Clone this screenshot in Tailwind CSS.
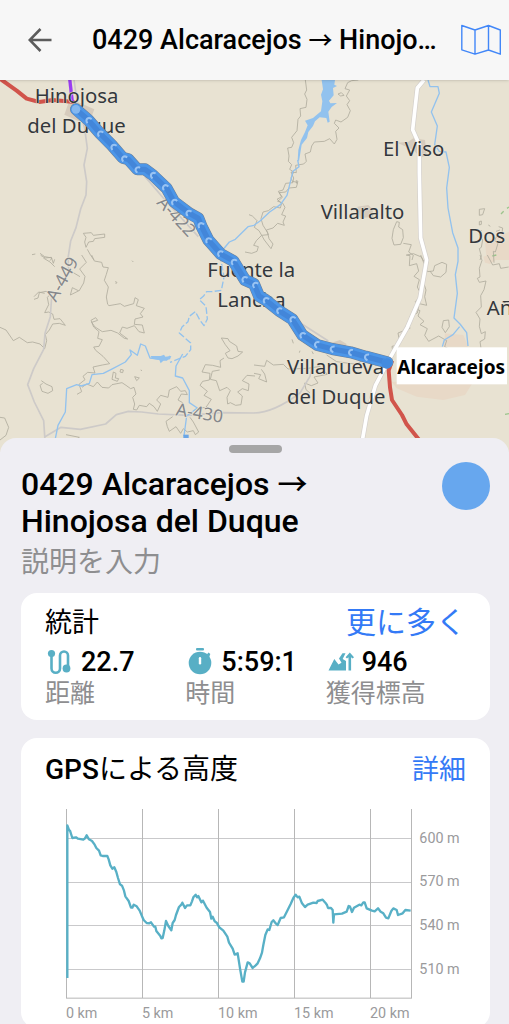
<!DOCTYPE html>
<html lang="ja">
  <head>
    <meta charset="UTF-8" />
    <meta name="viewport" content="width=device-width, initial-scale=1.0" />
    <title>0429 Alcaracejos → Hinojosa del Duque</title>
    <script src="https://cdn.jsdelivr.net/npm/@tailwindcss/browser@4"></script>
  </head>
  <body class="h-screen overflow-hidden flex flex-col bg-[#efeef3] text-black font-['Roboto','Noto_Sans_CJK_JP',sans-serif]">
    <!-- Top bar -->
    <header class="relative z-10 h-20 shrink-0 flex items-center pl-6 pr-2 bg-[#f7f7f7] shadow-sm">
      <button type="button" aria-label="戻る" class="w-8 h-8 shrink-0 flex items-center justify-center text-[#5c5c5c]">
        <svg class="w-6 h-6" viewBox="0 0 24 24" fill="none" stroke="currentColor" stroke-width="2.6"><path d="M23.500 12H2M12.500 1 1.700 12l10.800 11" /></svg>
      </button>
      <p class="flex-1 min-w-0 truncate ml-9 mr-4 text-[27px] leading-8 font-medium">0429 Alcaracejos <span class="text-2xl leading-8">→</span> Hinojosa del Duque</p>
      <button type="button" aria-label="地図" class="w-10 h-8 shrink-0 text-[#4287f8]">
        <svg class="w-10 h-8" viewBox="0 0 40 32" fill="none" stroke="currentColor" stroke-width="1.4" stroke-linejoin="round"><path d="M.8 1.500 14 6l13.500-4.500L39.300 6v24.200L27.500 26 14 30.200.8 25.800zM14 6v24M27.500 1.500V26" /></svg>
      </button>
    </header>

    <!-- Map -->
    <svg class="block w-full h-[372px] shrink-0 bg-[#e8e2d2] font-['Noto_Sans',sans-serif]" viewBox="0 0 1527 1116" preserveAspectRatio="xMidYMin slice" role="img" aria-label="ルート地図">
      <defs>
        <marker id="chevron" viewBox="-12 -12 24 24" markerWidth="24" markerHeight="24" markerUnits="userSpaceOnUse" orient="auto">
          <path d="M-5-9Q5-7 5 0 5 7-5 9" fill="none" stroke="#98c3f3" stroke-width="6" />
        </marker>
      </defs>

      <!-- built-up areas -->
      <g fill="#d6cbbd">
        <path d="M205 70 225 62 283 88 272 118 240 125 193 104z" />
        <path d="M1192 188 1225 185 1240 175 1275 180 1280 225 1262 233 1240 210z" />
        <path d="M1072 380 1105 375 1118 388 1120 410 1080 415z" />
        <path d="M990 790 1020 780 1040 792 1030 812 995 808z" />
      </g>
      <g fill="#e8d9c7">
        <path d="M1455 485 1527 455V540H1460z" />
        <path d="M1175 905H1420L1395 945 1330 960 1250 950 1190 925z" />
        <path d="M1335 760 1390 765 1405 800H1330z" />
        <path d="M1450 530 1475 522 1490 538 1470 552 1455 548z" />
      </g>
      <g fill="none" stroke="#9cc48c" stroke-width="4"><path d="M1503 402l8-8M1521 385l6-4M1477 528l12-3M1515 1003l12-2" /></g>

      <!-- contour lines -->
      <g fill="none" stroke="#b0ac9d" stroke-width="2.500" stroke-linejoin="round">
        <path d="M916 0l4 30-6 12 7 16-3 24-18 4 2 22-8 10-3 34-16 20 6 16-6 14-12 2 4 24-2 16 10 10-6 14 12 8-8 18 6 14-22 2-8 20-14 4 12 18-14 12 14 4 8 14-10 22 12 4-8 18 4 10-20-6-14 14-20 6 6 14-20 2-16 16-8 14 14 4-4 14-16 6-20-4" />
        <path d="M1075 0l-20 2-12 6-8 18 14 4-10 18 10 14-8 12 10 18-8 20-20 14-16-6-4 10 14 14-10 10 4 24-8 14-14-16-16 8-30 2-8 12-4 18-16 6 4 22-8 8-24 4 2 22-16-2 8 18-2 10 14 4-4 14-22 2-10 12-20 2 8 12-14 8 14 12-4 14-20-4-16 12-16 4-6 20 6 20 14 22 4 18 12 16-6 14-20-26-16-28-14-10 8-20-14-14-10-4" />
        <path d="M1014 42l10-4 8 8-10 2zM888 302l6 2-4 6z" />
        <path d="M1190 425l8 2-2 14 12 8 2 24-8 20-20 2-6-20 4-26zM1210 490l24 4-8 22 14 10-4 14M1220 525l20-4 24 10 8 14" />
        <path d="M1438 388l16-2-6 18-10 2zM1438 425l6-2v10l-6 2zM1496 440l12 4-2 14-14 4-8 20 10 8-8 26-6-2 2 34M1444 450l-6 14 10 16-4 22-6 4 6 22-4 12M1465 435l6 4M1500 450l-12 4" />
        <path d="M1218 525l12 2-2 30 22-6 6 22-14 16 16 10-6 22 12 24-18 20 10 14-4 20-22 10-4 24 4 12-36 14 4 22-12 16-10 2 4 26-10 10-8 26-16-2 4 24" />
        <path d="M1262 525l20 50 18-2 4-16 22-10 14 6-2 24-16 14-22-4-10-14M1268 600l10 30-4 20 6 26-26-6-8 16 14 6-6 16 18 16-12 10 22 12-8 20 12 18 30-16 24 14-6 18 18 10" />
        <path d="M1330 722l16-2 2 20-12 18-10-16z" />
        <path d="M1440 525l6 16-8 24 2 26-8 4 6 12 20-4-6 26-10 18 2 34-16 16 12 20-2 22 6 22 12-6-2 22-14 8 4 26" />
        <path d="M1462 525l16 30 20-4 4 14 24-4" />
        <path d="M762 855l32 4 6-18 20 14 30-2 14 14 60-2 36-6 22 24-40 8 12 18-20 8-20-8 4 20 12 10M762 880l20 4-6 12 24 10-6-24-10-14" />
        <path d="M980 825l30 20 60 8 16-12 40 12M876 778l4 12M900 812l-2 6M936 814l4 8" />
        <!-- south-west hills -->
        <path d="M250 460l24-2 6 8 34-4v10l-30 4-4 8-14 2-8 16-4-16 4-14zM262 508l10 18 10 14M96 524l10-2M120 520l14 10 22 4-6 8" />
        <path d="M122 526l14 8 18-2 6 18 4-12M130 534l20 12 14 14M245 525l14 22-20 20 16 22-4 20-14 24-20-10-6 22 24-12M240 590l-20-12M275 525l8 18 22 4 4 14 16 2-6 20-6 18 12 20-6 30 4 22 4 4 34-6 12 8 28-8 4-18 10 6-6 18 24 8-12 16 8 10-24 6-2 16 24 2 6 24-16-4-14-18-22 8-14-4-8 18 24 18-10-2-20-16-20-8-26 4-22-14-10-14 18-6-6-8-14 8 8 20 16 14-4 20 14 4-10 20-16 2 6 10 22 18 20 22-22 4-28 6 6 18-22-2-14 12 6 10-18 14 8 22-14 8" />
        <path d="M0 742l18 8 22 32 18-10 24 16 16-2 22 6 14 14 6-24-4-18 12-14 10-18 20-2 18 6-16-20-18 2-4-16-12-6-12 2 12-24-4-22 10-10-14-8-20 4-4 16-12 4M134 640l-18-4-14 14M345 605l6 2-4 5M396 542l4 4" />
        <path d="M124 902l14 10 18 8 2 12-14 8-18-6-6-18 8-6M362 868l8 2-2 8-8-2zM340 876l8 4-2 14 10 2-4 8-16-6zM404 890l14 4-8 8zM422 870l4 2" />
        <path d="M246 922l14-10 20 8 12-14 14 16 20 2 10-10 30-6 12 8 14 10 10-4 6 20-10 10 6 20-4 16 10 2 8-14 22 4 8-10 14 10 10 14 10-22-12-12 12-14 22 6 4-22 22-10 12 14 14-2 6 12-18-2-10 18 14 8" />
        <path d="M518 1010l-20 14 4 16 6 14 20-14 14 20 8-14 12 10 18-4 6 12 10-8-16-30-10-14" />
        <path d="M664 774l20 2 4 8 22 14 4 16 14 2-14 12-18 8-12-2-8-14 14-8-14-18zM672 834l-12 8 2 20-24-6-22-2-10 22 24 4-2 20-20 4-8 12 22 18-10 12 22 12-16 24-16 2M765 888l-24-2-14 16 20 10-2 20-18-6-14 10 14 12-4 26-16 2-16-8-8 4-2-20 10-20-10-10-22 10-10-30-18-4 6-24 22-4" />
        <path d="M0 1012l14 2 12 28-8 24-18 14M198 1064l40 8-20 12" />
      </g>

      <!-- minor roads -->
      <g fill="none" stroke="#cdcac8" stroke-width="5" stroke-linejoin="round">
        <path d="M222 0l10 70 22 75 8 60-10 50 8 50-2 40-16 42-14 56-16 40-8 52 2 34M155 650l-4 60-16 50-4 48-30 58-18 48 20 52 28 56 4 60" />
        <path d="M135 1070l48-28 58 6 76-16 32-28 36-10 40 2 50 6 90 4 100-8 95 1q60 0 140-60l30-50 6-30" />
        <path d="M435 290l60 70 100 110M840 690l75 48 70 45" />
      </g>
      <path d="M1272 0l-20 24-14 125 20 45v85l4 195 18 66-20 114-38 88-54 95-42 80-26 90-14 80" fill="none" stroke="#d3cfcb" stroke-width="15" stroke-linejoin="round" />
      <path d="M1272 0l-20 24-14 125 20 45v85l4 195 18 66-20 114-38 88-54 95-42 80-26 90-14 80" fill="none" stroke="#fff" stroke-width="11" stroke-linejoin="round" />

      <!-- water -->
      <path d="M965 0h40l-2 14 8 4-12 6 2 22-14 16 4 8 20-1-16 12-10 14 4 30-6 3-4-14-20-2-14 12-6 14-14 18-4 18-16 20-8 50-4-4 2-30 8-30 12-24 8-20-8-14 24-8 24-20 4-30-4-20 6-16z" fill="#92c2ee" />
      <g fill="none" stroke="#92c2ee" stroke-width="4" stroke-linejoin="round">
        <path d="M893 240l4 20-18 14-10 40-8 32-20 28-32 22-28 26-19 14-18 4-38 38-18 8-20 24" />
        <path d="M1284 0l6 20h24l4 20-24 56 18 42-8 56 14 20 20 2 10 46-8 62 4 60 14 74 16 46 0 40-8 40 6 56-10 74 18 18 20 26 4 40M1379 740l-20 24-26 16-6 20" />
        <path d="M660 525l12 66-8 40-28 4-16 0-10 14-12 10 20 20 4 38-10 20-12-16-14-26-18 14-4 16-18 16-8 18 34 30v20l-16 20-46 18" stroke-dasharray="20 7" />
        <path d="M548 822l-20 36-2 30 22 6 20 38v36l24 16-32 24-8 60" />
        <path d="M510 828l-10 12-50-6-14-36-14-6-10 34-22-16 4 14-18 22-42 22-24 12-34 4-8 26-24 8-14-4-30 12-4 70-22 40-8 40" />
      </g>
      <path d="M452 828l30 0 10-4 4 6 18-2-4 10-20 4-8 8-4-10-22-4z" fill="#92c2ee" />
      <path d="M550 1064h16v30h-16z" fill="#6ba6e6" />

      <!-- other tracks -->
      <g fill="none" stroke="#d1544b" stroke-width="12" stroke-linejoin="round">
        <path d="M0-4l50 36 30 24 38 10 40-6 65 6" />
        <path d="M1176 842l-10 30 4 50 6 38 30 45 14 28 36 45 30 30" />
      </g>
      <path d="M209-4l8 70" fill="none" stroke="#9b3df2" stroke-width="10" />

      <!-- place names -->
      <g fill="#34383c" font-size="61" stroke="#ece7da" stroke-width="3" paint-order="stroke">
        <text x="104" y="69">Hinojosa</text>
        <text x="82" y="158">del Duque</text>
        <text x="1149" y="229">El Viso</text>
        <text x="962" y="418">Villaralto</text>
        <text x="1405" y="490">Dos</text>
        <text x="622" y="592">Fuente la</text>
        <text x="652" y="681">Lancha</text>
        <text x="1460" y="704">Añ</text>
        <text x="861" y="882">Villanueva</text>
        <text x="861" y="971">del Duque</text>
      </g>
      <g fill="#85878b" font-size="53" stroke="#ece7da" stroke-width="4" paint-order="stroke">
        <text transform="translate(468 370) rotate(47)">A-422</text>
        <text transform="translate(168 668) rotate(-61)">A-449</text>
        <text transform="translate(526 1006) rotate(9)">A-430</text>
      </g>

      <!-- route -->
      <g fill="none" stroke-linecap="round" stroke-linejoin="round">
        <path d="M228 88L265 120 300 160 335 195 368 233 385 238 412 268 435 268 458 285 500 325 522 365 568 400 595 415 605 440 625 480 662 522 700 543 735 600 762 612 777 648 797 660 837 692 877 718 907 765 952 795 997 807 1052 817 1097 830 1162 847" stroke="#6d7f94" stroke-width="36" />
        <path d="M228 88L265 120 300 160 335 195 368 233 385 238 412 268 435 268 458 285 500 325 522 365 568 400 595 415 605 440 625 480 662 522 700 543 735 600 762 612 777 648 797 660 837 692 877 718 907 765 952 795 997 807 1052 817 1097 830 1162 847" stroke="#4c96e8" stroke-width="33" />
        <path d="M228 88L265 120 300 160 335 195 368 233 385 238 412 268 435 268 458 285 500 325 522 365 568 400 595 415 605 440 625 480 662 522 700 543 735 600 762 612 777 648 797 660 837 692 877 718 907 765 952 795 997 807 1052 817 1097 830 1162 847" stroke="#4386d9" stroke-width="16" />
        <path d="M1170 849L1155 846 1100 831 1052 817 997 807 950 793 907 765 877 717 837 691 797 660 765 614 733 597 701 545 660 520 625 480 602 435 565 398 522 365 495 321 458 285 412 268 372 235 340 200 300 160 265 120 228 88" marker-mid="url(#chevron)" />
      </g>
      <circle cx="228" cy="88" r="13" fill="#84b7ef" />
      <circle cx="1160" cy="850" r="16" fill="#438bdf" />

      <!-- end point label -->
      <rect x="1190" y="802" width="331" height="111" fill="#fff" />
      <text x="1192" y="881" font-size="57" font-weight="700">Alcaracejos</text>
    </svg>

    <!-- Bottom sheet -->
    <main class="relative z-10 -mt-3.5 flex-1 rounded-t-2xl bg-[#efeef3] pl-[21px] pr-[19px]">
      <div class="mx-auto mt-[7px] w-[53px] h-2 rounded-full bg-[#a6a6a6]"></div>
      <div class="flex justify-between items-start mt-[13px]">
        <h1 class="max-w-xs text-[32px] leading-[37px] font-medium">0429 Alcaracejos <span class="text-3xl leading-[37px]">→</span> Hinojosa del Duque</h1>
        <button type="button" aria-label="色" class="-mt-1 w-12 h-12 rounded-full bg-[#67a7ee]"></button>
      </div>
      <input type="text" aria-label="説明" placeholder="説明を入力" class="block w-full h-10 mt-[3px] bg-transparent text-[28px] placeholder:text-[#8e8e90] outline-none" />

      <section class="mt-[10px] rounded-2xl bg-white px-6 h-[127px]">
        <div class="flex items-center justify-between pt-3 h-12">
          <h2 class="text-[27px] leading-9">統計</h2>
          <a href="#stats" class="text-[30px] leading-9 text-[#347af6]">更に多く</a>
        </div>
        <dl class="grid grid-cols-3 mt-[5px]">
          <div class="flex flex-col-reverse">
            <dt class="text-[25px] leading-8 text-[#8e8e90] whitespace-nowrap">距離</dt>
            <dd class="flex items-center gap-2 text-[27px] leading-8 font-medium">
              <svg class="w-7 h-7 text-[#58afc5]" viewBox="0 0 28 28" fill="none" stroke="currentColor" stroke-width="2.600"><path d="M6.500 5v15.500a4.200 4.200 0 0 0 8.500 0V7.500a4 4 0 0 1 8 0V18" /><circle cx="6.500" cy="5.500" r="3.600" fill="currentColor" stroke="none" /><circle cx="21.500" cy="20.500" r="3.900" fill="currentColor" stroke="none" /></svg>
              22.7
            </dd>
          </div>
          <div class="flex flex-col-reverse">
            <dt class="text-[25px] leading-8 text-[#8e8e90] whitespace-nowrap">時間</dt>
            <dd class="flex items-center gap-2 text-[27px] leading-8 font-medium">
              <svg class="w-7 h-7 text-[#58afc5]" viewBox="0 0 28 28" fill="currentColor"><rect x="11" y="0" width="8" height="2.500" rx="1" /><circle cx="15" cy="15" r="11.300" /><path d="M21 7.500l2.500-3 1.800 1.500L24 9.500z" /><rect x="13.800" y="9" width="2.400" height="7.500" rx="1.200" fill="#fff" /></svg>
              5:59:1
            </dd>
          </div>
          <div class="flex flex-col-reverse">
            <dt class="text-[25px] leading-8 text-[#8e8e90] whitespace-nowrap">獲得標高</dt>
            <dd class="flex items-center gap-2 text-[27px] leading-8 font-medium">
              <svg class="w-7 h-7 text-[#58afc5]" viewBox="0 0 28 28" fill="currentColor"><path d="M2.500 22.500 8.300 11l4.200 5.500 3-1.800-2.500-4.200 3.500-5.300h3l-2.800 5.800 3.300 2v9.500z" /><path d="M23.800 4.500l4.200 4.800-1.400 1.300-1.500-1.400v13.300h-2.600V9.200l-1.500 1.400-1.400-1.300z" /></svg>
              946
            </dd>
          </div>
        </dl>
      </section>

      <section class="mt-[18px] rounded-2xl bg-white px-6 pb-1">
        <div class="flex items-center justify-between pt-3.5 h-[50px]">
          <h2 class="text-[28px] leading-9"><span class="font-medium">GPS</span>による高度</h2>
          <a href="#altitude" class="text-[27px] leading-9 text-[#347af6]">詳細</a>
        </div>
        <svg class="block w-full mt-[21px]" viewBox="135 237 1263 645" role="img" aria-label="高度グラフ">
          <path d="M201 325.500H1234M201 457.500H1234M201 586.500H1234M201 718.500H1234" stroke="#c9c9cb" stroke-width="3" />
          <path d="M199.500 237V804M427.500 237V804M655.500 237V804M883.500 237V804M1111.500 237V804M1234.500 237V804M198 804.500H1236" stroke="#b7b7b7" stroke-width="3" />
          <path d="M202 744V286L207 300 210 302 217 324 228 322 234 326 250 329 255 325 260 316 267 328 276 333 284 344 289 354 297 362 302 376 308 378H322L326 388 331 406 337 416 343 412 349 426 354 444 360 463 366 467 372 482 376 499 386 513 393 533 397 533 401 524 410 529 419 542 427 561 431 570 440 579 448 580 453 577 462 590 466 590 469 603 481 618 484 625 488 624 493 601 498 573 505 588 514 601 518 579 524 570 528 555 537 531 544 524 547 518 551 526 555 534 561 526 571 526 576 514 580 502 587 494 591 502 595 498 604 517 609 512 620 533 630 546 634 566 638 560 644 574 650 578 658 592 670 602 682 620 687 638 698 656 704 674 713 670 720 715 727 755 731 755 735 727 743 697 749 700 758 714 767 706 773 700 780 685 786 668 790 645 796 615 803 598 808 600 815 576 820 571 828 581 833 585 842 564 852 562 860 546 872 522 880 504 887 494 893 502 898 500 906 520 915 531 923 524 940 518 950 519 953 513 968 509 976 518 981 525 984 534 993 534 998 540 1000 578 1002 553 1026 551 1040 545 1046 528 1050 530 1056 546 1062 533 1078 524 1084 526 1090 517 1094 517 1100 535 1116 542 1124 544 1134 535 1142 545 1150 550 1158 563 1165 565 1174 543 1180 535 1190 540 1194 555 1208 550 1216 540 1232 542" fill="none" stroke="#58b0c6" stroke-width="7" stroke-linejoin="round" />
          <g fill="#9a9a9c" font-size="43">
            <text x="1258" y="339">600 m</text>
            <text x="1258" y="469">570 m</text>
            <text x="1258" y="600">540 m</text>
            <text x="1258" y="732">510 m</text>
            <text x="198" y="865">0 km</text>
            <text x="426" y="865">5 km</text>
            <text x="654" y="865">10 km</text>
            <text x="882" y="865">15 km</text>
            <text x="1110" y="865">20 km</text>
          </g>
        </svg>
      </section>
    </main>
  </body>
</html>
